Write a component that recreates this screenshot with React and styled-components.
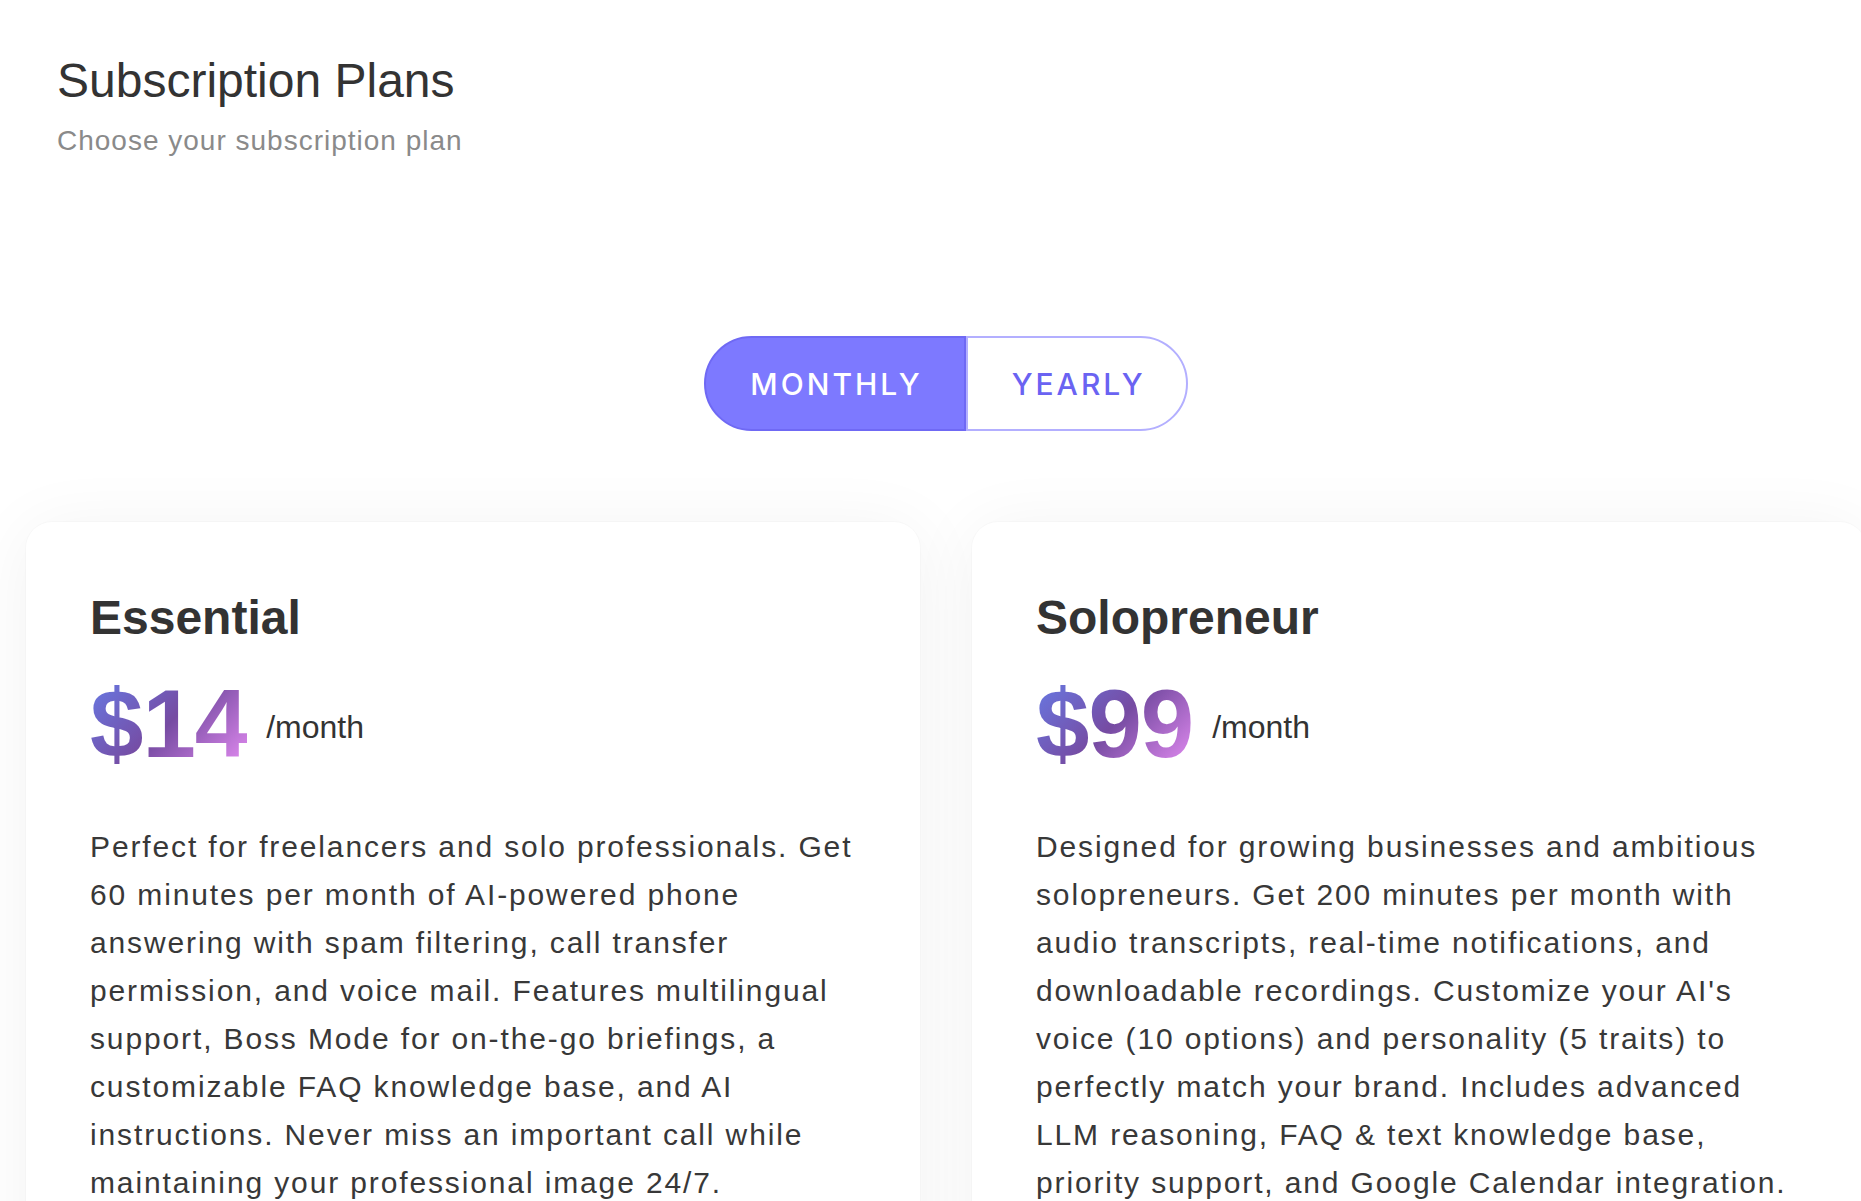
import React, { useState } from "react";
import styled, { createGlobalStyle } from "styled-components";

const GlobalStyle = createGlobalStyle`
  html, body {
    margin: 0;
    padding: 0;
    background: #ffffff;
    overflow-x: hidden;
  }
  body {
    font-family: "Liberation Sans", Arial, Helvetica, sans-serif;
    color: #333333;
    -webkit-font-smoothing: antialiased;
  }
  * { box-sizing: border-box; }
`;

const Page = styled.div`
  width: 1861px;
  min-height: 1201px;
  overflow: hidden;
`;

const Header = styled.header`
  padding: 52px 0 0 57px;
  display: flex;
  flex-direction: column;
  gap: 11px;
`;

const Title = styled.h1`
  margin: 0;
  font-size: 48px;
  line-height: 58px;
  font-weight: 400;
  color: #333333;
`;

const Subtitle = styled.p`
  margin: 0;
  font-size: 28px;
  line-height: 40px;
  letter-spacing: 1px;
  color: #8a8a8a;
`;

const Content = styled.main`
  width: 1840px;
  margin-left: 26px;
  display: flex;
  flex-direction: column;
  align-items: center;
  padding-top: 175px;
  gap: 91px;
`;

const ToggleGroup = styled.div`
  display: flex;
  height: 95px;
`;

const ToggleButton = styled.button`
  height: 95px;
  margin: 0;
  font-family: Inter, "Liberation Sans", sans-serif;
  font-size: 30px;
  font-weight: 500;
  letter-spacing: 3px;
  cursor: pointer;
  padding: ${(p) => (p.$first ? "0 41px 0 44px" : "0 40px 0 44px")};
  border: 2px solid ${(p) => (p.$active ? "#6f69f4" : "#b3afff")};
  background: ${(p) => (p.$active ? "#7d79ff" : "#ffffff")};
  color: ${(p) => (p.$active ? "#ffffff" : "#6a63f2")};
  border-radius: ${(p) => (p.$first ? "48px 0 0 48px" : "0 48px 48px 0")};
`;

const CardRow = styled.div`
  align-self: stretch;
  display: grid;
  grid-template-columns: 894px 894px;
  gap: 52px;
`;

const Card = styled.section`
  background: #ffffff;
  border-radius: 26px;
  box-shadow: 0 6px 70px rgba(0, 0, 0, 0.055), 0 0 0 1px rgba(0, 0, 0, 0.015);
  padding: 67px 64px 64px 64px;
  min-height: 760px;
`;

const PlanName = styled.h2`
  margin: 0;
  font-size: 48px;
  line-height: 58px;
  font-weight: 700;
  color: #333333;
`;

const PriceRow = styled.div`
  display: flex;
  align-items: center;
  gap: 19px;
  margin-top: 22px;
`;

const Price = styled.span`
  font-size: 96px;
  line-height: 110px;
  font-weight: 700;
  letter-spacing: -1px;
  background: linear-gradient(135deg, #667eea 0%, #764ba2 50%, #f093fb 100%);
  -webkit-background-clip: text;
  background-clip: text;
  color: transparent;
`;

const Period = styled.span`
  font-size: 32px;
  line-height: 40px;
  margin-top: 5px;
  color: #333333;
`;

const Description = styled.p`
  margin: 44px 0 0 0;
  font-size: 30px;
  line-height: 48px;
  letter-spacing: 1.87px;
  color: #383838;
`;

const plans = [
  {
    name: "Essential",
    price: "$14",
    description:
      "Perfect for freelancers and solo professionals. Get 60 minutes per month of AI-powered phone answering with spam filtering, call transfer permission, and voice mail. Features multilingual support, Boss Mode for on-the-go briefings, a customizable FAQ knowledge base, and AI instructions. Never miss an important call while maintaining your professional image 24/7.",
  },
  {
    name: "Solopreneur",
    price: "$99",
    description:
      "Designed for growing businesses and ambitious solopreneurs. Get 200 minutes per month with audio transcripts, real-time notifications, and downloadable recordings. Customize your AI's voice (10 options) and personality (5 traits) to perfectly match your brand. Includes advanced LLM reasoning, FAQ & text knowledge base, priority support, and Google Calendar integration.",
  },
];

export default function App() {
  const [period, setPeriod] = useState("monthly");
  return (
    <Page>
      <GlobalStyle />
      <Header>
        <Title>Subscription Plans</Title>
        <Subtitle>Choose your subscription plan</Subtitle>
      </Header>
      <Content>
        <ToggleGroup>
          <ToggleButton
            $first
            $active={period === "monthly"}
            onClick={() => setPeriod("monthly")}
          >
            MONTHLY
          </ToggleButton>
          <ToggleButton
            $active={period === "yearly"}
            onClick={() => setPeriod("yearly")}
          >
            YEARLY
          </ToggleButton>
        </ToggleGroup>
        <CardRow>
          {plans.map((plan) => (
            <Card key={plan.name}>
              <PlanName>{plan.name}</PlanName>
              <PriceRow>
                <Price>{plan.price}</Price>
                <Period>/month</Period>
              </PriceRow>
              <Description>{plan.description}</Description>
            </Card>
          ))}
        </CardRow>
      </Content>
    </Page>
  );
}
